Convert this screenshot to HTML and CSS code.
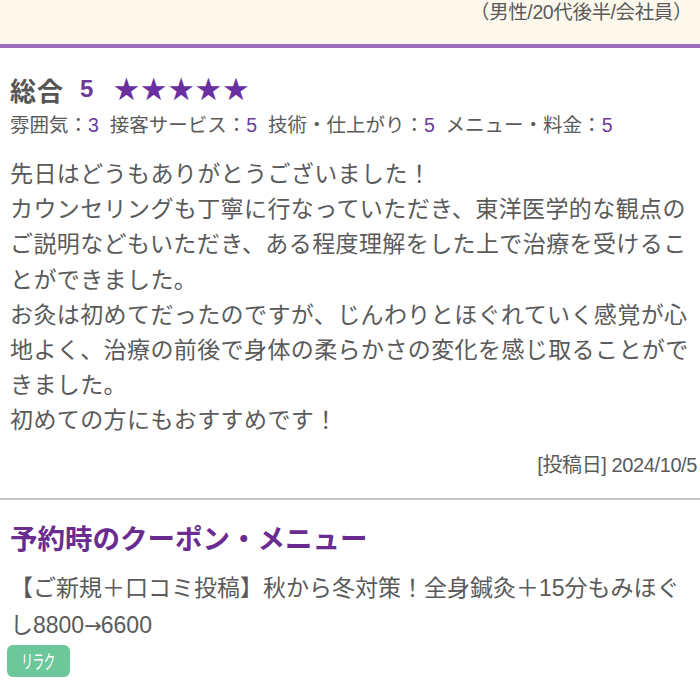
FILE: index.html
```html
<!DOCTYPE html>
<html lang="ja">
<head>
<meta charset="utf-8">
<link rel="stylesheet" href="styles.css">
</head>
<body>
<div class="top">
  <div class="profile">（男性/<span class="narrow">20</span>代後半/会社員）</div>
</div>
<div class="review">
  <div class="total">
    <span class="total-label">総合</span>
    <span class="total-num">5</span>
    <span class="stars">★★★★★</span>
  </div>
  <div class="sub">雰囲気：<span class="num">3</span>&nbsp; 接客サービス：<span class="num">5</span>&nbsp; 技術・仕上がり：<span class="num">5</span>&nbsp; メニュー・料金：<span class="num">5</span></div>
  <p class="body">先日はどうもありがとうございました！<br>カウンセリングも丁寧に行なっていただき、東洋医学的な観点の<br>ご説明などもいただき、ある程度理解をした上で治療を受けるこ<br>とができました。<br>お灸は初めてだったのですが、じんわりとほぐれていく感覚が心<br>地よく、治療の前後で身体の柔らかさの変化を感じ取ることがで<br>きました。<br>初めての方にもおすすめです！</p>
  <div class="date">[投稿日] 2024/10/5</div>
</div>
<div class="coupon">
  <h2 class="coupon-title">予約時のクーポン・メニュー</h2>
  <p class="coupon-text">【ご新規＋口コミ投稿】秋から冬対策！全身鍼灸＋<span class="narrow">15</span>分もみほぐ<br>し<span class="narrow">8800</span><span class="arrow">→</span><span class="narrow">6600</span></p>
  <span class="tag"><span class="tag-text">リラク</span></span>
</div>
</body>
</html>
```
FILE: styles.css
```css
html, body {
  margin: 0;
  padding: 0;
  background: #fff;
}
body {
  width: 700px;
  font-family: "Liberation Sans", "Noto Sans CJK JP", sans-serif;
  color: #5a5a5a;
}
.narrow {
  font-family: "Liberation Sans Narrow", "Liberation Sans", sans-serif;
}
.top {
  background: #fdf8ec;
  height: 44px;
  border-bottom: 4px solid #9a70b8;
}
.profile {
  text-align: right;
  font-size: 19.5px;
  line-height: 24px;
  padding-right: 8px;
  letter-spacing: -0.4px;
}
.review {
  padding: 20px 10px 0 10px;
  border-bottom: 2px solid #c4c4c4;
}
.total {
  display: flex;
  align-items: center;
  height: 42px;
}
.total-label {
  font-size: 26px;
  font-weight: bold;
  color: #555;
  letter-spacing: 1px;
}
.total-num {
  font-size: 24px;
  font-weight: bold;
  color: #6b3a9a;
  margin-left: 16px;
}
.stars {
  font-family: "DejaVu Sans", sans-serif;
  font-size: 31px;
  color: #6a2fa0;
  margin-left: 19px;
  letter-spacing: -0.4px;
}
.sub {
  font-size: 19.5px;
  line-height: 30px;
}
.num {
  color: #6b3a9a;
}
.body {
  margin: 17px 0 0 0;
  font-size: 23px;
  line-height: 35.2px;
  letter-spacing: 0.4px;
}
.date {
  text-align: right;
  font-size: 20px;
  line-height: 24px;
  margin-top: 14px;
  margin-right: -7px;
  padding-bottom: 21px;
  letter-spacing: -0.4px;
  font-family: "Liberation Sans Narrow", "Liberation Sans", "Noto Sans CJK JP", sans-serif;
}
.coupon {
  padding: 20px 10px 0 10px;
}
.coupon-title {
  margin: 0;
  font-size: 27.5px;
  line-height: 40px;
  font-weight: bold;
  color: #6a2c91;
}
.coupon-text {
  margin: 10px 0 0 0;
  font-size: 23px;
  line-height: 37px;
  white-space: nowrap;
}
.arrow {
  font-family: "DejaVu Sans", sans-serif;
  font-size: 21px;
  letter-spacing: -1px;
}
.tag {
  display: inline-flex;
  align-items: center;
  justify-content: center;
  margin-left: -3px;
  width: 63px;
  height: 32px;
  background: #6cc79a;
  border-radius: 6px;
}
.tag-text {
  display: inline-block;
  color: #fff;
  font-size: 19px;
  transform: scaleX(0.62);
  letter-spacing: -1px;
}
```
